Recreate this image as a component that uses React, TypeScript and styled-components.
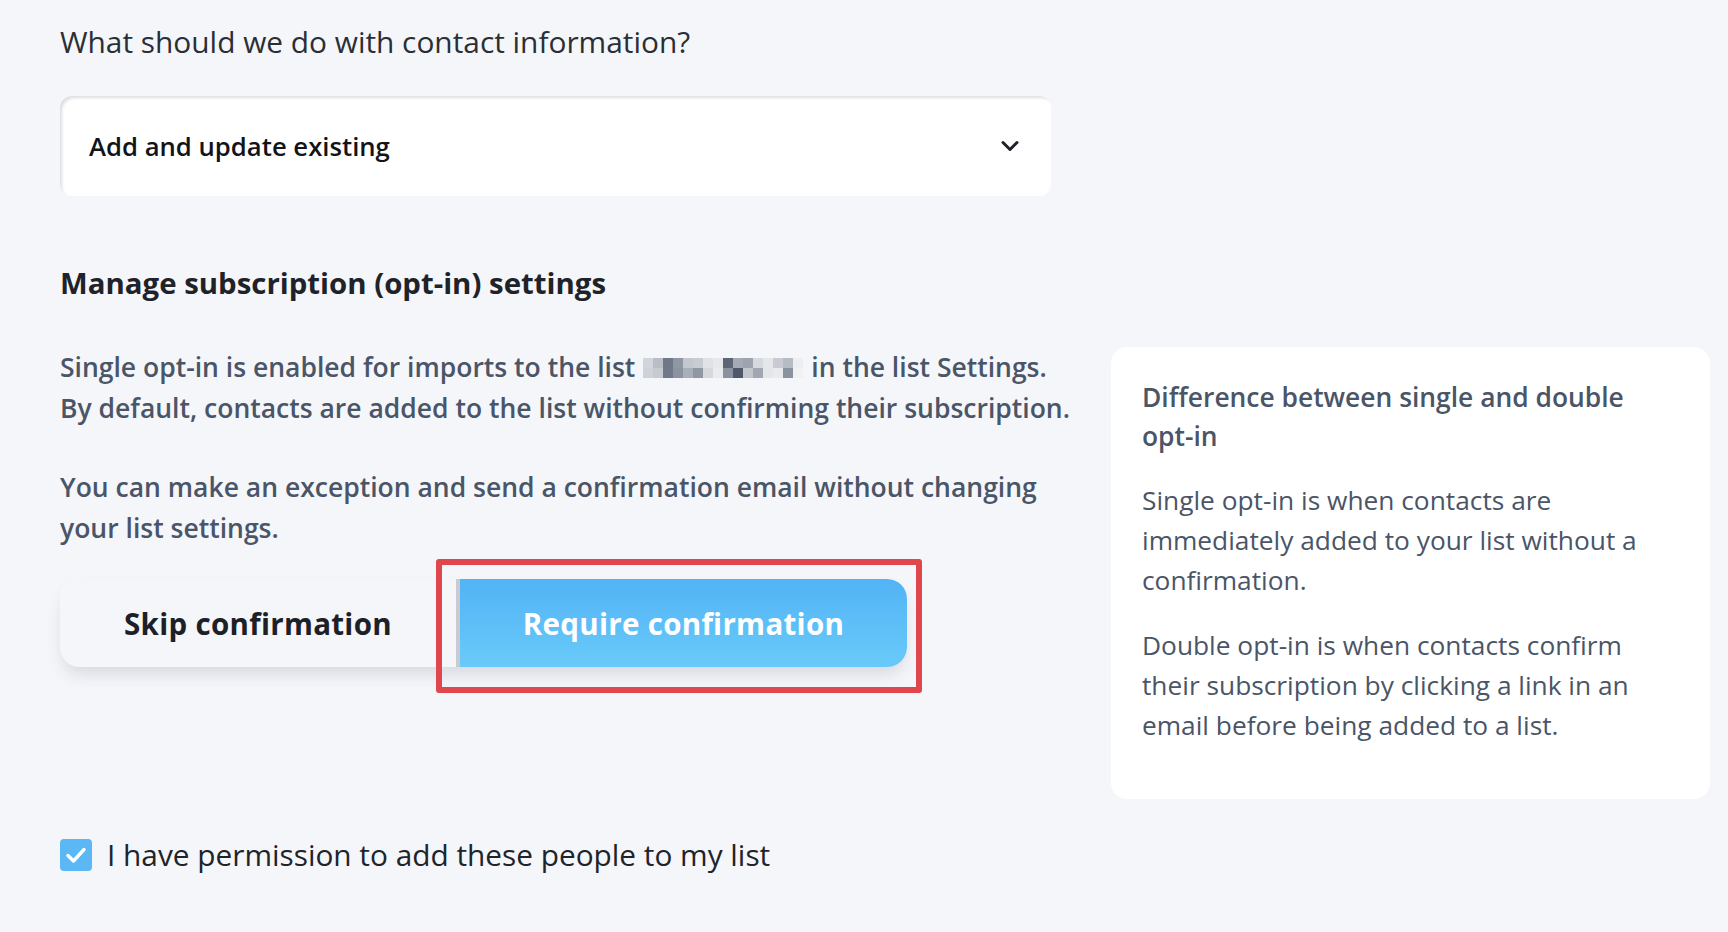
import React from "react";
import styled, { createGlobalStyle } from "styled-components";

const GlobalStyle = createGlobalStyle`
  html, body {
    margin: 0;
    padding: 0;
    background: #f5f6fa;
  }
  body {
    font-family: "Open Sans", "Noto Sans", sans-serif;
    -webkit-font-smoothing: antialiased;
  }
  * { box-sizing: border-box; }
`;

const Page = styled.div`
  width: 1728px;
  min-height: 932px;
  padding: 22px 60px 40px 60px;
  background: #f5f6fa;
`;

const Question = styled.p`
  margin: 0;
  font-size: 29.85px;
  line-height: 40px;
  font-weight: 400;
  color: #2a2f36;
`;

const Select = styled.div`
  margin-top: 34px;
  width: 991px;
  height: 100px;
  background: #ffffff;
  border-radius: 12px;
  box-shadow: inset 3px 3px 3px -1px rgba(60, 70, 90, 0.18);
  display: flex;
  align-items: center;
  justify-content: space-between;
  padding: 0 32px 0 29px;
`;

const SelectValue = styled.span`
  font-size: 25.7px;
  font-weight: 600;
  color: #111418;
`;

const Heading = styled.h2`
  margin: 67px 0 0 0;
  font-size: 29.4px;
  line-height: 40px;
  font-weight: 700;
  color: #1f2329;
`;

const Row = styled.div`
  margin-top: 44px;
  display: grid;
  grid-template-columns: 1019px 599px;
  column-gap: 32px;
  align-items: start;
`;

const LeftCol = styled.div`
  display: flex;
  flex-direction: column;
`;

const Para = styled.p<{ $gap?: number }>`
  margin: 0 0 ${(p) => p.$gap ?? 0}px 0;
  font-size: 26.5px;
  line-height: 41px;
  font-weight: 600;
  color: #4a5567;
  white-space: nowrap;
`;

const Blur = styled.span`
  display: inline-flex;
  flex-wrap: wrap;
  width: 160px;
  height: 20px;
  vertical-align: middle;
  margin: -4px 8px 0 8px;
`;

const Pix = styled.span<{ $c: string }>`
  width: 10px;
  height: 10px;
  background: ${(p) => p.$c};
`;

const Segmented = styled.div`
  position: relative;
  margin-top: 30px;
  display: flex;
  width: 847px;
  height: 88px;
  border-radius: 20px;
  box-shadow: 0 10px 18px -4px rgba(40, 50, 70, 0.16);
`;

const SegButton = styled.button<{ $active?: boolean }>`
  border: none;
  margin: 0;
  padding: 0;
  height: 100%;
  font-family: inherit;
  font-size: 29.5px;
  font-weight: 700;
  letter-spacing: 0.3px;
  cursor: pointer;
  display: flex;
  align-items: center;
  justify-content: center;
  ${(p) =>
    p.$active
      ? `
    width: 451px;
    color: #ffffff;
    background: linear-gradient(180deg, #52b3f6 0%, #69caf9 100%);
    border-left: 4px solid #c8ccd2;
    border-radius: 0 20px 20px 0;
  `
      : `
    width: 396px;
    color: #1d2127;
    background: #f4f6fa;
    border-radius: 20px 0 0 20px;
  `}
`;

const Highlight = styled.div`
  position: absolute;
  left: 376px;
  top: -20px;
  width: 486px;
  height: 134px;
  border: 6px solid #e0474c;
  border-radius: 3px;
  pointer-events: none;
`;

const Card = styled.aside`
  background: #ffffff;
  border-radius: 16px;
  padding: 31px 31px 29px 31px;
  min-height: 451px;
`;

const CardTitle = styled.h3`
  margin: 0 0 24px 0;
  font-size: 26.4px;
  line-height: 39px;
  font-weight: 600;
  color: #4a5567;
`;

const CardText = styled.p`
  margin: 0 0 25px 0;
  font-size: 26.3px;
  line-height: 40px;
  font-weight: 400;
  color: #4a5567;
  white-space: nowrap;
`;

const CheckRow = styled.label`
  margin-top: 40px;
  display: flex;
  align-items: center;
  gap: 15px;
  cursor: pointer;
`;

const Box = styled.span`
  width: 32px;
  height: 32px;
  border-radius: 4px;
  background: #5bb8f5;
  display: flex;
  align-items: center;
  justify-content: center;
  flex-shrink: 0;
`;

const CheckLabel = styled.span`
  font-size: 29.8px;
  line-height: 32px;
  font-weight: 400;
  color: #20242a;
`;

const pixRow1 = ["#d2d6dc", "#b9bec6", "#6f7887", "#8f97a3", "#c3c8cf", "#c9cdd3", "#dfe2e6", "#e6e8eb", "#5d6677", "#a4abb5", "#9da4ae", "#d6d9de", "#e4e6e9", "#c8ccd2", "#b6bcc4", "#eceef1"];
const pixRow2 = ["#cfd3d9", "#c6cad1", "#707989", "#8b93a0", "#a9afb8", "#8f97a2", "#d5d8dd", "#e9ebee", "#8a929f", "#4e586a", "#c2c7ce", "#a0a7b1", "#e4e6ea", "#e8eaed", "#8a92a0", "#f0f1f3"];

const Chevron = () => (
  <svg width="18" height="12" viewBox="0 0 18 12" fill="none">
    <path d="M2 2.5 L9 9.5 L16 2.5" stroke="#1d2127" strokeWidth="3" strokeLinecap="round" strokeLinejoin="round" />
  </svg>
);

const Check = () => (
  <svg width="22" height="18" viewBox="0 0 22 18" fill="none">
    <path d="M3 9.5 L8.5 15 L19 3.5" stroke="#ffffff" strokeWidth="3.4" strokeLinecap="round" strokeLinejoin="round" />
  </svg>
);

export default function App() {
  return (
    <>
      <GlobalStyle />
      <Page>
        <Question>What should we do with contact information?</Question>
        <Select>
          <SelectValue>Add and update existing</SelectValue>
          <Chevron />
        </Select>
        <Heading>Manage subscription (opt-in) settings</Heading>
        <Row>
          <LeftCol>
            <Para>
              Single opt-in is enabled for imports to the list
              <Blur>
                {[...pixRow1, ...pixRow2].map((c, i) => (
                  <Pix key={i} $c={c} />
                ))}
              </Blur>
              in the list Settings.
            </Para>
            <Para $gap={38}>
              By default, contacts are added to the list without confirming their subscription.
            </Para>
            <Para>You can make an exception and send a confirmation email without changing</Para>
            <Para>your list settings.</Para>
            <Segmented>
              <SegButton>Skip confirmation</SegButton>
              <SegButton $active>Require confirmation</SegButton>
              <Highlight />
            </Segmented>
          </LeftCol>
          <Card>
            <CardTitle>
              Difference between single and double
              <br />
              opt-in
            </CardTitle>
            <CardText>
              Single opt-in is when contacts are
              <br />
              immediately added to your list without a
              <br />
              confirmation.
            </CardText>
            <CardText>
              Double opt-in is when contacts confirm
              <br />
              their subscription by clicking a link in an
              <br />
              email before being added to a list.
            </CardText>
          </Card>
        </Row>
        <CheckRow>
          <Box>
            <Check />
          </Box>
          <CheckLabel>I have permission to add these people to my list</CheckLabel>
        </CheckRow>
      </Page>
    </>
  );
}
